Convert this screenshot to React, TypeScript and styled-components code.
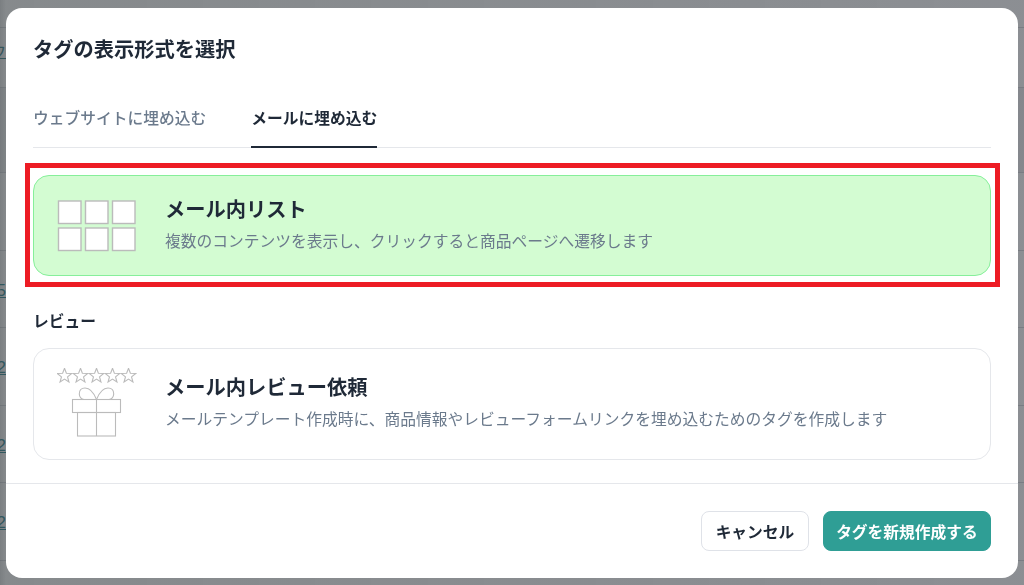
import React from "react";
import styled, { createGlobalStyle } from "styled-components";

const Global = createGlobalStyle`
  html, body { margin: 0; padding: 0; width: 1024px; height: 585px; overflow: hidden; background: #fff; }
  * { box-sizing: border-box; }
  body { font-family: "Noto Sans CJK JP", "Noto Sans", sans-serif; color: #1f2937; }
`;

const Page = styled.div`
  width: 1024px;
  height: 585px;
  overflow: hidden;
  background: #fff;
`;
const PageNav = styled.div`
  height: 28px;
  border-bottom: 1px solid #d5d8dc;
`;
const PageSub = styled.div`
  height: 60px;
  border-bottom: 1px solid #d5d8dc;
  padding-top: 11px;
  width: 100%;
`;
const SubLink = styled.div`
  width: 100%;
  overflow: hidden;
  font-size: 16px;
  line-height: 22px;
  color: #2b7c86;
  text-decoration: underline;
  margin-left: -10px;
`;
const HeaderBand = styled.div`
  height: 85px;
  background: #eff0f2;
  border-bottom: 1px solid #d5d8dc;
`;
const Row = styled.div`
  height: 77.5px;
  border-bottom: 1px solid #d5d8dc;
  display: flex;
  align-items: center;
  padding-top: 4px;
`;
const RowNum = styled.div`
  width: 6px;
  overflow: hidden;
  direction: rtl;
  font-family: "Liberation Sans", sans-serif;
  font-size: 17px;
  line-height: 20px;
  color: #1d7f8c;
  text-decoration: underline;
`;

const Backdrop = styled.div`
  position: fixed;
  inset: 0;
  background: linear-gradient(90deg, rgba(60, 66, 70, 0.68) 0, rgba(60, 66, 70, 0.62) 6px, rgba(45, 50, 58, 0.55) 1018px);
  padding: 8px 6px 7px;
`;
const Modal = styled.div`
  width: 1012px;
  height: 570px;
  background: #fff;
  border-radius: 16px;
  display: flex;
  flex-direction: column;
  overflow: hidden;
`;
const Body = styled.div`
  flex: 1;
  padding: 26px 27px 0;
`;
const Title = styled.h2`
  margin: 0;
  font-size: 20.25px;
  line-height: 30px;
  font-weight: 600;
  color: #1f2937;
`;
const Tabs = styled.div`
  display: flex;
  gap: 45px;
  margin-top: 36px;
  border-bottom: 1px solid #e5e7eb;
  height: 48px;
`;
const Tab = styled.div<{ $active?: boolean }>`
  height: 48px;
  padding-top: 6px;
  font-size: 15.75px;
  line-height: 24px;
  font-weight: ${(p) => (p.$active ? 600 : 500)};
  color: ${(p) => (p.$active ? "#1f2937" : "#6b7a8c")};
  border-bottom: 2px solid ${(p) => (p.$active ? "#1f2937" : "transparent")};
`;
const Highlighted = styled.div`
  position: relative;
  margin-top: 27px;
`;
const Marker = styled.div`
  position: absolute;
  left: -8px;
  right: -9px;
  top: -12px;
  bottom: -11px;
  border: 5px solid #ed1c24;
  pointer-events: none;
`;
const Card = styled.div<{ $selected?: boolean }>`
  display: flex;
  align-items: center;
  height: ${(p) => (p.$selected ? "101px" : "112px")};
  border-radius: 16px;
  border: 1px solid ${(p) => (p.$selected ? "#86ef9a" : "#e5e7eb")};
  background: ${(p) => (p.$selected ? "#d3fcd2" : "#fff")};
  padding-left: 23px;
`;
const CardIcon = styled.svg`
  flex: none;
  width: 80px;
  display: block;
`;
const CardText = styled.div`
  margin-left: 28px;
  margin-bottom: 4px;
`;
const CardTitle = styled.div`
  font-size: 20.25px;
  line-height: 28px;
  font-weight: 600;
  color: #1f2937;
`;
const CardDesc = styled.div`
  margin-top: 6px;
  font-size: 15.75px;
  line-height: 24px;
  color: #6b7a8c;
`;
const SectionLabel = styled.div`
  margin-top: 33px;
  margin-bottom: 15px;
  font-size: 15.75px;
  line-height: 24px;
  font-weight: 600;
  color: #1f2937;
`;
const Footer = styled.div`
  border-top: 1px solid #e5e7eb;
  padding: 27px 27px;
  display: flex;
  justify-content: flex-end;
  gap: 14px;
`;
const Button = styled.button<{ $primary?: boolean }>`
  height: 40px;
  border-radius: 8px;
  font-family: inherit;
  font-size: 15.75px;
  font-weight: 600;
  padding: 0 ${(p) => (p.$primary ? "12.125px" : "13.625px")};
  border: 1px solid ${(p) => (p.$primary ? "#2f9e95" : "#dfe2e8")};
  background: ${(p) => (p.$primary ? "#2f9e95" : "#fff")};
  color: ${(p) => (p.$primary ? "#fff" : "#1f2937")};
`;

const GridIcon = () => (
  <CardIcon viewBox="0 0 80 52" height="52" fill="#fff" stroke="#bbbbbb" strokeWidth="1.4">
    {[0, 27, 54].flatMap((x) =>
      [0, 27].map((y) => <rect key={`${x}-${y}`} x={x + 1.5} y={y + 1} width={22.5} height={22.5} />)
    )}
  </CardIcon>
);

const starPath = (cx: number, cy: number, R = 7.6, r = 3.2) => {
  const pts: string[] = [];
  for (let i = 0; i < 10; i++) {
    const rad = i % 2 === 0 ? R : r;
    const a = -Math.PI / 2 + (i * Math.PI) / 5;
    pts.push(`${(cx + rad * Math.cos(a)).toFixed(2)},${(cy + rad * Math.sin(a)).toFixed(2)}`);
  }
  return pts.join(" ");
};

const GiftIcon = () => (
  <CardIcon viewBox="0 0 80 72" height="72" fill="none" stroke="#bbbbbb" strokeWidth="1.1">
    {[7.5, 23.5, 39.5, 55.5, 71.5].map((cx) => (
      <polygon key={cx} points={starPath(cx, 7.9)} />
    ))}
    <rect x="15.5" y="31.5" width="48" height="13" />
    <rect x="20.5" y="44.5" width="38" height="23.5" />
    <path d="M39.5 31.5V68" />
    <path d="M39.5 31.5C36.5 24 32 20 28 20C24 20 22.3 23 22.3 26C22.3 29 24.5 31.5 27 31.5" />
    <path d="M39.5 31.5C42.5 24 47 20 51 20C55 20 56.7 23 56.7 26C56.7 29 54.5 31.5 52 31.5" />
  </CardIcon>
);

export default function App() {
  return (
    <>
      <Global />
      <Page>
        <PageNav />
        <PageSub>
          <SubLink>ウ</SubLink>
        </PageSub>
        <HeaderBand />
        {["", "5", "2", "2", "2"].map((n, i) => (
          <Row key={i}>
            <RowNum>{n}</RowNum>
          </Row>
        ))}
      </Page>
      <Backdrop>
        <Modal>
          <Body>
            <Title>タグの表示形式を選択</Title>
            <Tabs>
              <Tab>ウェブサイトに埋め込む</Tab>
              <Tab $active>メールに埋め込む</Tab>
            </Tabs>
            <Highlighted>
              <Card $selected>
                <GridIcon />
                <CardText>
                  <CardTitle>メール内リスト</CardTitle>
                  <CardDesc>複数のコンテンツを表示し、クリックすると商品ページへ遷移します</CardDesc>
                </CardText>
              </Card>
              <Marker />
            </Highlighted>
            <SectionLabel>レビュー</SectionLabel>
            <Card>
              <GiftIcon />
              <CardText>
                <CardTitle>メール内レビュー依頼</CardTitle>
                <CardDesc>メールテンプレート作成時に、商品情報やレビューフォームリンクを埋め込むためのタグを作成します</CardDesc>
              </CardText>
            </Card>
          </Body>
          <Footer>
            <Button>キャンセル</Button>
            <Button $primary>タグを新規作成する</Button>
          </Footer>
        </Modal>
      </Backdrop>
    </>
  );
}
